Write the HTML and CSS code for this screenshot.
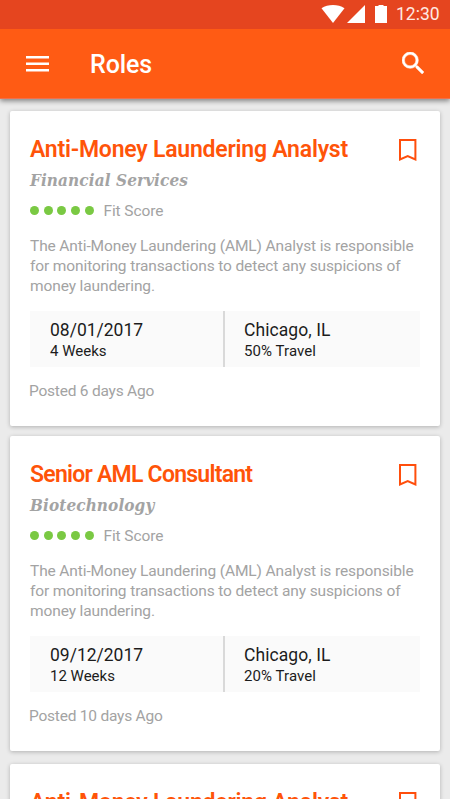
FILE: index.html
```html
<!DOCTYPE html>
<html lang="en">
<head>
<meta charset="utf-8">
<title>Roles</title>
<link rel="stylesheet" href="styles.css">
</head>
<body>
<div class="screen">
  <header class="header">
    <div class="status">
      <svg class="wifi" viewBox="0 0 24 18"><path d="M0.5 3.2C7-1 17-1 23.5 3.2L12 18z"/></svg>
      <svg class="signal" viewBox="0 0 18 18"><path d="M18 0v18H0z"/></svg>
      <svg class="battery" viewBox="0 0 12 18"><path d="M3.5 0h5v1H12v17H0V1h3.500z"/></svg>
      <span class="clock">12:30</span>
    </div>
    <div class="toolbar">
      <svg class="menu" viewBox="0 0 23 16"><path d="M0 0h23v2.600H0zM0 6.500h23v2.600H0zM0 13h23v2.600H0z"/></svg>
      <h1 class="heading">Roles</h1>
      <svg class="search" viewBox="3 3 17.500 17.500"><path d="M15.500 14h-.79l-.28-.27A6.471 6.471 0 0 0 16 9.500 6.500 6.500 0 1 0 9.500 16c1.610 0 3.090-.59 4.230-1.570l.27.28v.79l5 4.990L20.490 19l-4.990-5zm-6 0C7.010 14 5 11.990 5 9.500S7.010 5 9.500 5 14 7.010 14 9.500 11.990 14 9.500 14z"/></svg>
    </div>
  </header>
  <main class="list">
    <article class="card">
      <div class="title-row">
        <h2 class="title">Anti-Money Laundering Analyst</h2>
        <svg class="bookmark" viewBox="0 0 18 22"><path d="M1 1h15.400v19.500l-7.700-3.400L1 20.500z"/></svg>
      </div>
      <p class="field">Financial Services</p>
      <div class="score"><i class="dot"></i><i class="dot"></i><i class="dot"></i><i class="dot"></i><i class="dot"></i><span class="score-label">Fit Score</span></div>
      <p class="summary">The Anti-Money Laundering (AML) Analyst is responsible<br>for monitoring transactions to detect any suspicions of<br>money laundering.</p>
      <div class="facts">
        <div class="fact"><p class="main">08/01/2017</p><p class="sub">4 Weeks</p></div>
        <div class="fact"><p class="main">Chicago, IL</p><p class="sub">50% Travel</p></div>
      </div>
      <p class="posted">Posted 6 days Ago</p>
    </article>
    <article class="card">
      <div class="title-row">
        <h2 class="title title-tight">Senior AML Consultant</h2>
        <svg class="bookmark" viewBox="0 0 18 22"><path d="M1 1h15.400v19.500l-7.700-3.400L1 20.500z"/></svg>
      </div>
      <p class="field">Biotechnology</p>
      <div class="score"><i class="dot"></i><i class="dot"></i><i class="dot"></i><i class="dot"></i><i class="dot"></i><span class="score-label">Fit Score</span></div>
      <p class="summary">The Anti-Money Laundering (AML) Analyst is responsible<br>for monitoring transactions to detect any suspicions of<br>money laundering.</p>
      <div class="facts">
        <div class="fact"><p class="main">09/12/2017</p><p class="sub">12 Weeks</p></div>
        <div class="fact"><p class="main">Chicago, IL</p><p class="sub">20% Travel</p></div>
      </div>
      <p class="posted">Posted 10 days Ago</p>
    </article>
    <article class="card card-last">
      <div class="title-row">
        <h2 class="title">Anti-Money Laundering Analyst</h2>
        <svg class="bookmark" viewBox="0 0 18 22"><path d="M1 1h15.400v19.500l-7.700-3.400L1 20.500z"/></svg>
      </div>
    </article>
  </main>
</div>
</body>
</html>
```
FILE: styles.css
```css
* { box-sizing: border-box; margin: 0; padding: 0; }
body { background: #fff; font-family: Roboto, "Liberation Sans", sans-serif; }
.screen { width: 450px; height: 799px; overflow: hidden; background: #ebebeb; }
svg { display: block; flex: none; }

.header { position: relative; height: 99px; background: #ff5b14; border-bottom: 1px solid #f0704c; box-shadow: 0 2px 5px rgba(0, 0, 0, .45); fill: #fff; color: #fff; }
.status { display: flex; align-items: center; height: 29px; padding: 0 10px 1px 0; justify-content: flex-end; background: #e5451f; }
.wifi { width: 24px; height: 18px; }
.signal { width: 18px; height: 18px; margin-left: 2px; }
.battery { width: 12px; height: 18px; margin-left: 10px; }
.clock { width: 44px; margin-left: 9px; font-size: 17.500px; line-height: 28px; white-space: nowrap; color: #ffe9e2; }
.toolbar { display: flex; align-items: center; height: 69px; padding: 0 26px; }
.menu { width: 23px; height: 16px; }
.heading { margin: 2px 0 0 41px; font-size: 25px; font-weight: 500; line-height: 30px; letter-spacing: -.1px; }
.search { width: 22px; height: 22px; margin: -2px 0 0 auto; stroke: #fff; stroke-width: .4px; }

.list { padding: 12px 10px 0; }
.card { height: 315px; margin-bottom: 10px; padding: 20px; background: #fff; border-radius: 2px; box-shadow: 0 1px 4px rgba(0, 0, 0, .25); }
.card-last { margin-top: 13px; }
.title-row { display: flex; height: 36px; justify-content: space-between; }
.title { padding-top: 1px; color: #ff5409; font-size: 23px; font-weight: 600; line-height: 36px; letter-spacing: -.22px; white-space: nowrap; }
.title-tight { letter-spacing: -.75px; }
.bookmark { width: 18px; height: 22px; margin: 8px 3px 0 0; fill: none; stroke: #ff4e0c; stroke-width: 2px; }
.field { height: 26px; color: #a3a3a3; font: italic bold 17px/26px "DejaVu Serif Condensed", "DejaVu Serif", serif; font-stretch: condensed; letter-spacing: .1px; white-space: nowrap; }
.score { display: flex; align-items: center; height: 36px; gap: 4.700px; }
.dot { width: 9px; height: 9px; margin-top: -1px; border-radius: 50%; background: #7ac943; }
.score-label { margin-left: 5px; color: #a3a3a3; font-size: 15.500px; line-height: 20px; letter-spacing: -.1px; }
.summary { height: 60px; margin-top: 7px; color: #a3a3a3; font-size: 15.500px; line-height: 20px; letter-spacing: -.12px; white-space: nowrap; }
.facts { display: grid; grid-template-columns: 195px 195px; height: 56px; margin-top: 15px; background: #fafafa; }
.fact { padding: 9px 0 0 20px; color: #1c1c1c; white-space: nowrap; }
.fact:first-child { border-right: 2px solid #d9d9d9; }
.fact:last-child { padding-left: 19px; }
.fact:last-child p { letter-spacing: .08px; }
.main { font-size: 17.500px; line-height: 21px; }
.sub { font-size: 15px; line-height: 20px; }
.posted { margin: 14px 0 0 -1px; color: #a3a3a3; font-size: 15.500px; line-height: 20px; letter-spacing: -.22px; }
```
